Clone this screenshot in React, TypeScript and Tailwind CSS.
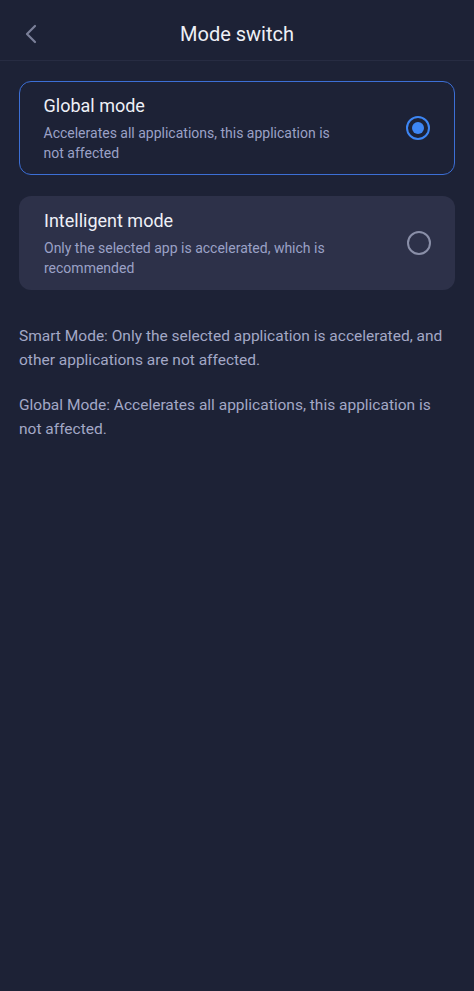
import { useState } from "react";

const MODES = [
    { id: "global", title: "Global mode", desc: "Accelerates all applications, this application is not affected" },
    { id: "smart", title: "Intelligent mode", desc: "Only the selected app is accelerated, which is recommended" },
];

export default function App() {
    const [mode, setMode] = useState("global");

    return (
        <div className="min-h-[991px] bg-[#1d2236] text-white" style={{ fontFamily: "Roboto, 'Noto Sans', sans-serif" }}>
            {/* Header */}
            <div className="relative flex h-[61px] items-center justify-center border-b border-[#272c42]">
                <button className="absolute left-[22px] top-[22px] text-[#7b8099]">
                    <svg width="20" height="24" viewBox="0 0 20 24" fill="none" stroke="currentColor" strokeWidth="2.2" strokeLinecap="round" strokeLinejoin="round">
                        <path d="M13 4 L5 12 L13 20" />
                    </svg>
                </button>
                <h1 className="text-[20px] text-[#eef0f7] mt-[8px]">Mode switch</h1>
            </div>

            <div className="px-[19px] pt-[20px]">
                <div className="flex flex-col gap-[21px]">
                    {MODES.map((m) => {
                        const active = mode === m.id;
                        return (
                            <button
                                key={m.id}
                                onClick={() => setMode(m.id)}
                                className={`flex h-[94px] items-center rounded-[12px] pr-[24px] text-left ${
                                    active ? "border-[1.5px] border-[#3c6fd6] bg-[#1d2236] pl-[23.5px]" : "bg-[#2d3149] pl-[25px]"
                                }`}
                            >
                                <div className="flex-1">
                                    <div className="text-[18px] leading-[24px] text-[#eef0f7]">{m.title}</div>
                                    <div className="mt-[5px] max-w-[300px] text-[14px] leading-[20px] text-[#9ba1c6]">{m.desc}</div>
                                </div>
                                {active ? (
                                    <span className="flex h-[24px] w-[24px] items-center justify-center rounded-full border-[2.5px] border-[#3d86f4]">
                                        <span className="h-[12px] w-[12px] rounded-full bg-[#3d86f4]" />
                                    </span>
                                ) : (
                                    <span className="h-[24px] w-[24px] rounded-full border-2 border-[#8a8fa8]" />
                                )}
                            </button>
                        );
                    })}
                </div>

                <p className="mt-[35px] text-[15.5px] leading-[23.5px] text-[#a3a8c6]">
                    Smart Mode: Only the selected application is accelerated, and other applications are not affected.
                </p>
                <p className="mt-[22px] text-[15.5px] leading-[23.5px] text-[#a3a8c6]">
                    Global Mode: Accelerates all applications, this application is not affected.
                </p>
            </div>
        </div>
    );
}
